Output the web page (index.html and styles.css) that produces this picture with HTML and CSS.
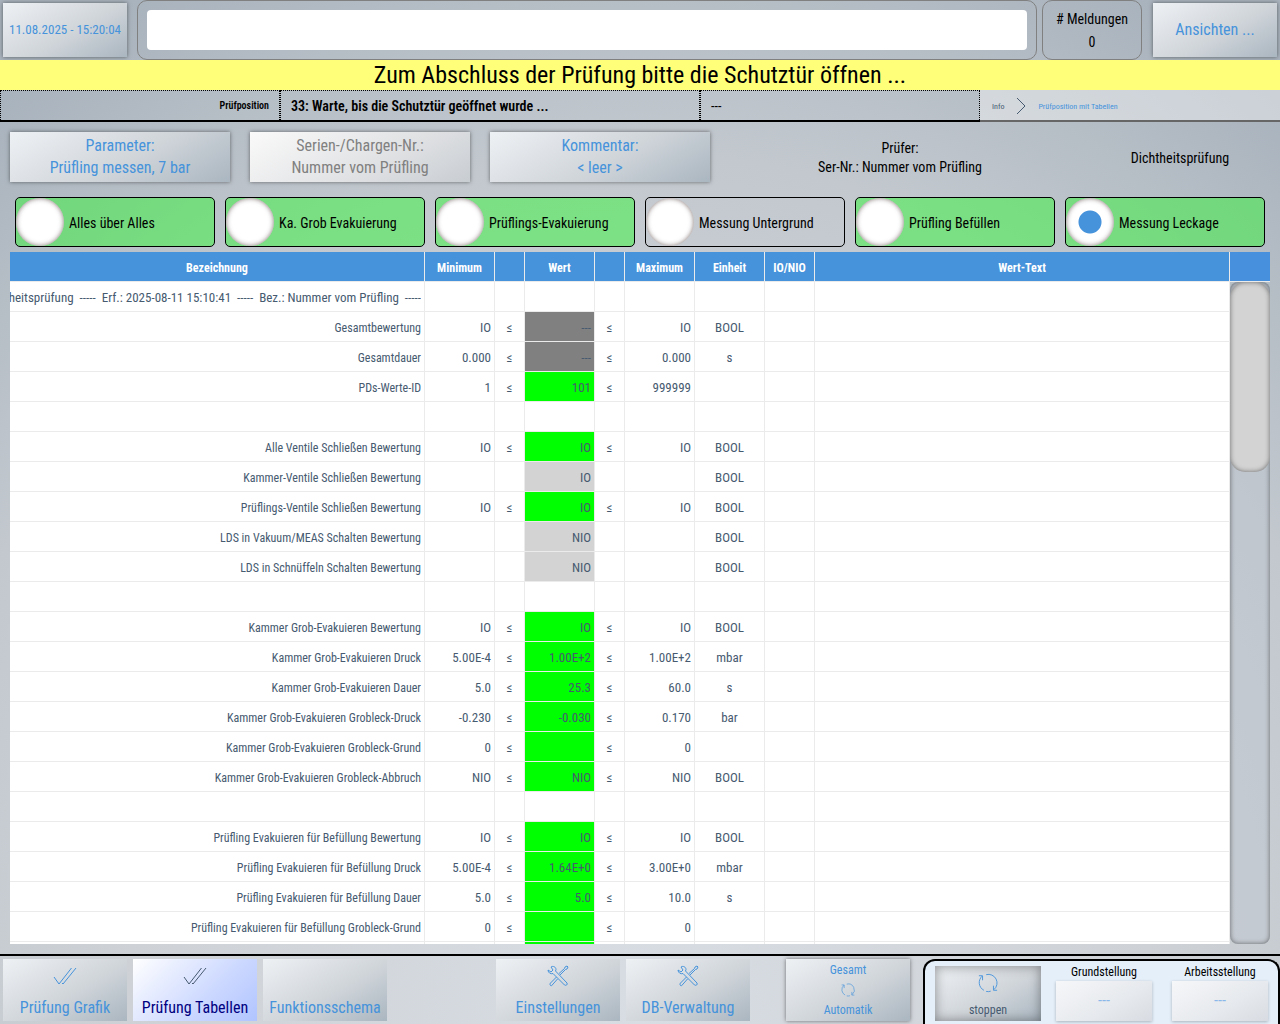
FILE: index.html
```
<!DOCTYPE html>
<html lang="de">
<head>
<meta charset="utf-8">
<meta name="viewport" content="width=device-width, initial-scale=1">
<title>Prüfposition mit Tabellen</title>
<link rel="stylesheet" href="styles.css">
</head>
<body>
<svg class="symbols" aria-hidden="true">
  <symbol id="icon-checks" viewBox="0 0 24 18">
    <path d="M1 10l5 7L18.500 1M9 16l1 1L23 1"/>
  </symbol>
  <symbol id="icon-tools" viewBox="0 0 22 22">
    <path d="M12 8.500 17.500 3.500l.5-1.500 2-1 1 1-1 2-1.500.5L13 10M9.500 12l-6 6c-1 1-.5 3 1 2.800L10.500 14"/>
    <path d="M4 2c2-1.500 5 0 5 2.500L8.500 6l11.500 12c1 1.500-1 3-2.500 2L6 8.500c-2 .8-5-.5-5-3.500L4 7l2-2z"/>
  </symbol>
  <symbol id="icon-cycle" viewBox="0 0 22 22">
    <path d="M6.500 19A9.500 9.500 0 0 1 4.500 3.500M1 3h4v5M9 1.800a9.500 9.500 0 0 1 8.500 16.500M21 19h-4v-5M9 20.300a9.500 9.500 0 0 0 5-.3"/>
  </symbol>
</svg>

<header class="topbar">
  <button class="btn btn-clock" type="button">11.08.2025 - 15:20:04</button>
  <div class="message-frame"><input class="message-input" type="text" aria-label="Meldung"></div>
  <div class="message-count"><span># Meldungen</span><span>0</span></div>
  <button class="btn btn-top" type="button">Ansichten ...</button>
</header>

<p class="notice">Zum Abschluss der Prüfung bitte die Schutztür öffnen ...</p>

<div class="status">
  <div class="status-cell status-name">Prüfposition</div>
  <div class="status-cell status-step">33: Warte, bis die Schutztür geöffnet wurde ...</div>
  <div class="status-cell status-extra">---</div>
  <nav class="breadcrumb" aria-label="Navigationspfad">
    <a class="crumb-parent" href="#">Info</a>
    <svg class="crumb-arrow" viewBox="0 0 10 18" aria-hidden="true"><path d="M1 1l8 8-8 8"/></svg>
    <a href="#">Prüfposition mit Tabellen</a>
  </nav>
</div>

<main class="content">
  <div class="params">
    <button class="btn btn-param" type="button">Parameter:<br>Prüfling messen, 7 bar</button>
    <button class="btn btn-param btn-disabled" type="button" disabled>Serien-/Chargen-Nr.:<br>Nummer vom Prüfling</button>
    <button class="btn btn-param" type="button">Kommentar:<br>&lt; leer &gt;</button>
    <p class="param-text">Prüfer:<br>Ser-Nr.: Nummer vom Prüfling</p>
    <p class="param-text">Dichtheitsprüfung</p>
  </div>

  <div class="phases" role="radiogroup" aria-label="Prüfschritt">
    <label class="phase phase-ok"><input type="radio" name="phase"><span>Alles über Alles</span></label>
    <label class="phase phase-ok"><input type="radio" name="phase"><span>Ka. Grob Evakuierung</span></label>
    <label class="phase phase-ok"><input type="radio" name="phase"><span>Prüflings-Evakuierung</span></label>
    <label class="phase"><input type="radio" name="phase"><span>Messung Untergrund</span></label>
    <label class="phase phase-ok"><input type="radio" name="phase"><span>Prüfling Befüllen</span></label>
    <label class="phase phase-ok"><input type="radio" name="phase" checked><span>Messung Leckage</span></label>
  </div>

  <section class="results" aria-label="Messwerte">
    <div class="table-view">
      <table class="values">
        <colgroup>
          <col><col class="w-value"><col class="w-sign"><col class="w-value"><col class="w-sign"><col class="w-value"><col class="w-value"><col class="w-flag"><col>
        </colgroup>
        <thead>
          <tr><th>Bezeichnung</th><th>Minimum</th><th></th><th>Wert</th><th></th><th>Maximum</th><th>Einheit</th><th>IO/NIO</th><th>Wert-Text</th></tr>
        </thead>
        <tbody>
          <tr><td><div class="title-line">-----  Dichtheitsprüfung  -----  Erf.: 2025-08-11 15:10:41  -----  Bez.: Nummer vom Prüfling  -----</div></td><td></td><td></td><td></td><td></td><td></td><td></td><td></td><td></td></tr>
          <tr><td>Gesamtbewertung</td><td>IO</td><td>≤</td><td class="off">---</td><td>≤</td><td>IO</td><td>BOOL</td><td></td><td></td></tr>
          <tr><td>Gesamtdauer</td><td>0.000</td><td>≤</td><td class="off">---</td><td>≤</td><td>0.000</td><td>s</td><td></td><td></td></tr>
          <tr><td>PDs-Werte-ID</td><td>1</td><td>≤</td><td class="ok">101</td><td>≤</td><td>999999</td><td></td><td></td><td></td></tr>
          <tr><td></td><td></td><td></td><td></td><td></td><td></td><td></td><td></td><td></td></tr>
          <tr><td>Alle Ventile Schließen Bewertung</td><td>IO</td><td>≤</td><td class="ok">IO</td><td>≤</td><td>IO</td><td>BOOL</td><td></td><td></td></tr>
          <tr><td>Kammer-Ventile Schließen Bewertung</td><td></td><td></td><td class="none">IO</td><td></td><td></td><td>BOOL</td><td></td><td></td></tr>
          <tr><td>Prüflings-Ventile Schließen Bewertung</td><td>IO</td><td>≤</td><td class="ok">IO</td><td>≤</td><td>IO</td><td>BOOL</td><td></td><td></td></tr>
          <tr><td>LDS in Vakuum/MEAS Schalten Bewertung</td><td></td><td></td><td class="none">NIO</td><td></td><td></td><td>BOOL</td><td></td><td></td></tr>
          <tr><td>LDS in Schnüffeln Schalten Bewertung</td><td></td><td></td><td class="none">NIO</td><td></td><td></td><td>BOOL</td><td></td><td></td></tr>
          <tr><td></td><td></td><td></td><td></td><td></td><td></td><td></td><td></td><td></td></tr>
          <tr><td>Kammer Grob-Evakuieren Bewertung</td><td>IO</td><td>≤</td><td class="ok">IO</td><td>≤</td><td>IO</td><td>BOOL</td><td></td><td></td></tr>
          <tr><td>Kammer Grob-Evakuieren Druck</td><td>5.00E-4</td><td>≤</td><td class="ok">1.00E+2</td><td>≤</td><td>1.00E+2</td><td>mbar</td><td></td><td></td></tr>
          <tr><td>Kammer Grob-Evakuieren Dauer</td><td>5.0</td><td>≤</td><td class="ok">25.3</td><td>≤</td><td>60.0</td><td>s</td><td></td><td></td></tr>
          <tr><td>Kammer Grob-Evakuieren Grobleck-Druck</td><td>-0.230</td><td>≤</td><td class="ok">-0.030</td><td>≤</td><td>0.170</td><td>bar</td><td></td><td></td></tr>
          <tr><td>Kammer Grob-Evakuieren Grobleck-Grund</td><td>0</td><td>≤</td><td class="ok"></td><td>≤</td><td>0</td><td></td><td></td><td></td></tr>
          <tr><td>Kammer Grob-Evakuieren Grobleck-Abbruch</td><td>NIO</td><td>≤</td><td class="ok">NIO</td><td>≤</td><td>NIO</td><td>BOOL</td><td></td><td></td></tr>
          <tr><td></td><td></td><td></td><td></td><td></td><td></td><td></td><td></td><td></td></tr>
          <tr><td>Prüfling Evakuieren für Befüllung Bewertung</td><td>IO</td><td>≤</td><td class="ok">IO</td><td>≤</td><td>IO</td><td>BOOL</td><td></td><td></td></tr>
          <tr><td>Prüfling Evakuieren für Befüllung Druck</td><td>5.00E-4</td><td>≤</td><td class="ok">1.64E+0</td><td>≤</td><td>3.00E+0</td><td>mbar</td><td></td><td></td></tr>
          <tr><td>Prüfling Evakuieren für Befüllung Dauer</td><td>5.0</td><td>≤</td><td class="ok">5.0</td><td>≤</td><td>10.0</td><td>s</td><td></td><td></td></tr>
          <tr><td>Prüfling Evakuieren für Befüllung Grobleck-Grund</td><td>0</td><td>≤</td><td class="ok"></td><td>≤</td><td>0</td><td></td><td></td><td></td></tr>
          <tr><td></td><td></td><td></td><td class="ok"></td><td></td><td></td><td></td><td></td><td></td></tr>
        </tbody>
      </table>
    </div>
    <div class="scroll">
      <div class="scroll-cap"></div>
      <div class="scroll-track"><div class="scroll-thumb"></div></div>
    </div>
  </section>
</main>

<footer class="bottombar">
  <nav class="btn-group" aria-label="Ansicht">
    <button class="btn btn-nav" type="button"><svg class="icon icon-checks"><use href="#icon-checks"/></svg><span>Prüfung Grafik</span></button>
    <button class="btn btn-nav btn-active" type="button"><svg class="icon icon-checks"><use href="#icon-checks"/></svg><span>Prüfung Tabellen</span></button>
    <button class="btn btn-nav" type="button"><span>Funktionsschema</span></button>
  </nav>
  <nav class="btn-group btn-group-tools" aria-label="Verwaltung">
    <button class="btn btn-nav" type="button"><svg class="icon"><use href="#icon-tools"/></svg><span>Einstellungen</span></button>
    <button class="btn btn-nav" type="button"><svg class="icon"><use href="#icon-tools"/></svg><span>DB-Verwaltung</span></button>
  </nav>
  <button class="btn btn-mode" type="button"><span>Gesamt</span><svg class="icon icon-small"><use href="#icon-cycle"/></svg><span>Automatik</span></button>
  <section class="machine" aria-label="Stellung">
    <button class="btn btn-stop" type="button"><svg class="icon icon-cycle"><use href="#icon-cycle"/></svg><span>stoppen</span></button>
    <div class="position"><label for="home">Grundstellung</label><button class="btn btn-position" id="home" type="button">---</button></div>
    <div class="position"><label for="work">Arbeitsstellung</label><button class="btn btn-position" id="work" type="button">---</button></div>
  </section>
</footer>
</body>
</html>
```
FILE: styles.css
```
:root {
  --blue: #4693db;
  --line: #ebebeb;
  --text: #465a70;
}

* { box-sizing: border-box; }

body {
  margin: 0;
  height: 100vh;
  display: flex;
  flex-direction: column;
  overflow: hidden;
  background: radial-gradient(ellipse 80% 115% at 50% 100%, #d8dde3, #ced2d7 50%, #c2c8ce 74%, #a9b3bd);
  color: #000;
  font-family: "Roboto Condensed", Roboto, sans-serif;
  font-size: 14px;
}

p { margin: 0; }

.symbols { display: none; }

.icon {
  width: 22px;
  height: 22px;
  fill: none;
  stroke: currentColor;
  stroke-width: 1;
}
.icon-checks { width: 24px; height: 18px; }
.icon-cycle { width: 20px; height: 20px; }
.icon-small { width: 14px; height: 14px; }

.btn {
  border: 0;
  padding: 0;
  background: linear-gradient(150deg, #eef1f4, #d0d5da 55%, #aab6c0);
  box-shadow: 0 0 4px rgba(0, 0, 0, 0.5);
  color: var(--blue);
  font: 400 16px/22px "Roboto Condensed", Roboto, sans-serif;
}

/* Top bar */
.topbar {
  display: flex;
  align-items: center;
  height: 60px;
  flex: none;
  padding: 0 3px;
}
.btn-clock, .btn-top { width: 124px; height: 54px; flex: none; }
.btn-clock { font-size: 13px; }
.message-frame {
  flex: 1;
  height: 60px;
  margin: 0 5px 0 10px;
  padding: 9px;
  border: 1px solid #808080;
  border-radius: 10px;
}
.message-input {
  display: block;
  width: 100%;
  height: 40px;
  padding: 0 8px;
  border: 0;
  border-radius: 4px;
  background: #fff;
  font: inherit;
}
.message-count {
  width: 100px;
  height: 60px;
  margin-right: 11px;
  padding-top: 2px;
  display: flex;
  flex-direction: column;
  align-items: center;
  justify-content: center;
  line-height: 23px;
  border: 1px solid #808080;
  border-radius: 10px;
}

.notice {
  flex: none;
  background: #ffff7a;
  font-size: 24px;
  line-height: 30px;
  text-align: center;
}

/* Status line */
.status {
  flex: none;
  display: grid;
  grid-template-columns: 280fr 420fr 280fr 300fr;
  height: 32px;
  border-bottom: 2px solid #000;
}
.status-cell {
  padding: 0 10px;
  border: 1px dotted #000;
  line-height: 30px;
}
.status-name { text-align: right; font-size: 10px; font-weight: 600; }
.status-step { font-weight: 600; }
.breadcrumb {
  display: flex;
  align-items: center;
  gap: 12px;
  padding-left: 12px;
  background: rgba(255, 255, 255, 0.4);
  font-size: 8px;
}
.breadcrumb a { color: var(--blue); text-decoration: none; }
.breadcrumb .crumb-parent { color: var(--text); }
.crumb-arrow {
  width: 10px;
  height: 18px;
  fill: none;
  stroke: var(--text);
}

/* Content */
.content {
  flex: 1;
  min-height: 0;
  display: flex;
  flex-direction: column;
  padding: 10px;
}
.params {
  display: grid;
  grid-template-columns: 220px 220px 220px 1fr 180px;
  gap: 20px;
  align-items: center;
}
.btn-param { height: 50px; }
.btn-disabled {
  color: #808080;
  background: linear-gradient(150deg, #fafafa, #e2e3e5 55%, #c8cdd2);
}
.param-text { padding-top: 2px; text-align: center; line-height: 19px; }

.phases {
  display: grid;
  grid-template-columns: repeat(6, 1fr);
  gap: 10px;
  padding: 15px 5px 5px;
}
.phase {
  display: flex;
  align-items: center;
  gap: 5px;
  height: 50px;
  border: 1px solid #000;
  border-radius: 5px;
}
.phase span { padding-top: 2px; }
.phase-ok { background: rgba(51, 245, 56, 0.5); }
.phase input {
  appearance: none;
  flex: none;
  width: 48px;
  height: 48px;
  margin: 0;
  border-radius: 50%;
  background: #fff;
  box-shadow: inset 0 0 5px rgba(80, 60, 60, 0.7);
}
.phase input:checked {
  background: radial-gradient(circle, var(--blue) 11px, #fff 12px);
}

/* Measured values */
.results {
  flex: 1;
  min-height: 0;
  display: grid;
  grid-template-columns: 1fr 40px;
}
.table-view { overflow: hidden; background: #fff; }
.values {
  width: 100%;
  border-collapse: separate;
  border-spacing: 0;
  table-layout: fixed;
  color: var(--text);
  font-size: 13px;
}
.w-value { width: 70px; }
.w-sign { width: 30px; }
.w-flag { width: 50px; }
.values th, .values td {
  height: 30px;
  padding: 2px 3px 0;
  border-right: 1px solid var(--line);
  border-bottom: 1px solid var(--line);
  white-space: nowrap;
  line-height: 20px;
}
.values th { background: var(--blue); color: #fff; font-size: 12px; font-weight: 700; }
.values td { text-align: right; }
.values td:first-child { font-size: 12px; }
.values td:nth-child(3), .values td:nth-child(5), .values td:nth-child(7) { text-align: center; }
.values .off { background: #808080; }
.values .ok { background: #0f0; }
.values .none { background: #d3d3d3; }
.title-line {
  display: flex;
  justify-content: flex-end;
  overflow: hidden;
  margin-left: -3px;
  font-size: 13px;
  white-space: pre;
}

.scroll { display: flex; flex-direction: column; }
.scroll-cap {
  height: 30px;
  background: #4690de;
  border-bottom: 1px solid var(--line);
}
.scroll-track {
  flex: 1;
  border-radius: 8px;
  box-shadow: inset 0 0 5px rgba(0, 0, 0, 0.5);
  background: rgba(190, 198, 208, 0.4);
}
.scroll-thumb {
  height: 190px;
  border-radius: 15px;
  background: #d3d3d3;
  box-shadow: inset 0 0 5px rgba(0, 0, 0, 0.5);
}

/* Bottom bar */
.bottombar {
  flex: none;
  display: flex;
  height: 70px;
  padding: 3px 0 0 3px;
  border-top: 2px solid #000;
}
.btn-group { display: flex; gap: 6px; }
.btn-group-tools { margin-left: auto; }
.btn-nav, .btn-mode {
  display: flex;
  flex-direction: column;
  align-items: center;
  width: 124px;
  height: 62px;
}
.btn-nav { justify-content: flex-end; gap: 10px; padding-bottom: 2px; box-shadow: none; }
.btn-nav .icon-checks { margin-bottom: 2px; }
.btn-active {
  background: linear-gradient(135deg, #fff, #ccd8ff 60%, #b0c4ff);
  color: #000080;
}
.btn-active .icon { color: var(--text); }
.btn-mode {
  flex: none;
  justify-content: space-between;
  margin: 0 13px 0 36px;
  font-size: 12px;
}
.machine {
  flex: none;
  display: flex;
  gap: 15px;
  padding: 5px 10px 0;
  border: 2px solid #000;
  border-bottom: 0;
  border-radius: 12px 12px 0 0;
  background: #e4effa;
}
.btn-stop {
  display: flex;
  flex-direction: column;
  align-items: center;
  justify-content: flex-end;
  gap: 6px;
  width: 106px;
  height: 55px;
  box-shadow: inset 0 0 12px rgba(0, 0, 0, 0.4);
  font-size: 12px;
}
.btn-stop span { color: var(--text); }
.position {
  display: flex;
  flex-direction: column;
  align-items: center;
  font-size: 12px;
  line-height: 13px;
}
.position + .position { margin-left: 5px; }
.btn-position {
  width: 96px;
  height: 40px;
  margin-top: 2px;
  background: linear-gradient(150deg, #f6f7f9, #e6e9ed 60%, #d8dce2);
  box-shadow: 0 1px 3px rgba(0, 0, 0, 0.25);
  color: #8ab8ea;
}
```
